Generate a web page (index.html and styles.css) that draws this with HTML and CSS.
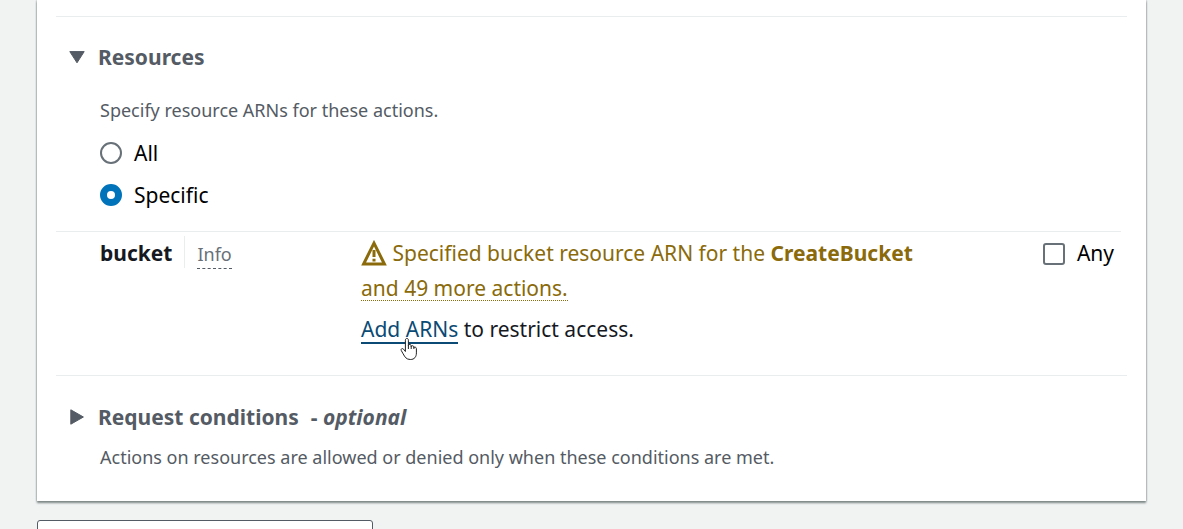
FILE: index.html
```html
<!DOCTYPE html>
<html lang="en">
<head>
<meta charset="utf-8">
<title>Resources</title>
<link rel="stylesheet" href="styles.css">
</head>
<body>
<main class="page">
  <div class="card">
    <section class="section resources">
      <h2 class="heading">
        <button class="toggle" type="button" aria-expanded="true">
          <svg class="caret" viewBox="0 0 18 18" aria-hidden="true"><path d="M1.8 3.6h14.4L9 14.8z"/></svg>
          <span>Resources</span>
        </button>
      </h2>
      <fieldset class="choices">
        <legend class="hint">Specify resource ARNs for these actions.</legend>
        <label class="choice"><input class="radio" type="radio" name="scope"><span>All</span></label>
        <label class="choice"><input class="radio" type="radio" name="scope" checked><span>Specific</span></label>
      </fieldset>
      <div class="resource">
        <div class="name">
          <strong>bucket</strong>
          <span class="info-wrap"><a class="info" href="#info">Info</a></span>
        </div>
        <div class="detail">
          <p class="warning">
            <svg class="warning-icon" viewBox="0 0 26 26" aria-hidden="true"><path class="warning-shape" d="M13 3.2 23.4 24H2.6z"/><path class="warning-mark" d="M13 10v7M13 18.8v2.6"/></svg>
            Specified bucket resource ARN for the <strong>CreateBucket</strong><br><a class="more" href="#actions">and 49 more actions.</a>
          </p>
          <p class="restrict"><span class="add-wrap"><a class="add" href="#add">Add ARNs</a><svg class="pointer" viewBox="0 0 18 24" aria-hidden="true"><path d="M5.4 14.5V3.2c0-2.4 3-2.4 3 0v5.2c.2-1.4 2.6-1.2 2.8.3v.8c.4-1.2 2.5-.9 2.7.4v.8c.5-1 2.5-.7 2.5 1v4.2c0 4-2 6.600-6 6.600-4.200 0-5.500-2.500-7.200-5.600L1.300 13.600c-.8-1.700 1-2.700 2.200-1.500z"/><path d="M8.400 8v4M11.200 9v3M13.900 10v2"/></svg></span> to restrict access.</p>
        </div>
        <label class="choice any"><input class="checkbox" type="checkbox"><span>Any</span></label>
      </div>
    </section>
    <section class="section conditions">
      <h2 class="heading">
        <button class="toggle" type="button" aria-expanded="false">
          <svg class="caret" viewBox="0 0 18 18" aria-hidden="true"><path d="M2.800 1.800v14.400L15.400 9z"/></svg>
          <span>Request conditions</span>
          <span class="optional">- <em>optional</em></span>
        </button>
      </h2>
      <p class="hint">Actions on resources are allowed or denied only when these conditions are met.</p>
    </section>
  </div>
  <button class="next" type="button"></button>
</main>
</body>
</html>
```

FILE: styles.css
```css
* {
  box-sizing: border-box;
}

body {
  margin: 0;
  height: 100vh;
  overflow: hidden;
  background: #f1f3f3;
  color: #16191f;
  font: 21px/35px "Noto Sans", sans-serif;
}

p,
h2,
fieldset,
legend {
  margin: 0;
  padding: 0;
  border: 0;
}

.page {
  padding: 0 37px;
}

.card {
  padding: 16px 19px 30px;
  background: #fff;
  box-shadow: 0 2px 2px #7f8787, 0 0 2px #8d9595;
}

.section {
  border-top: 1px solid #eaeded;
}

.resources {
  padding: 24px 0 28px;
}

.conditions {
  padding: 25px 0 0;
}

.heading {
  font-size: 21px;
  line-height: 32px;
}

.toggle {
  display: flex;
  align-items: center;
  gap: 12px;
  padding: 0 0 0 12px;
  border: 0;
  background: none;
  color: #545b64;
  font: inherit;
  cursor: pointer;
}

.caret {
  width: 18px;
  height: 18px;
  fill: #545b64;
  stroke: #545b64;
  stroke-width: 1;
  stroke-linejoin: round;
}

.hint {
  color: #545b64;
  font-size: 18px;
  line-height: 28px;
}

.choices,
.conditions .hint {
  padding-left: 44px;
}

.choices {
  padding-bottom: 12px;
}

.conditions .hint {
  padding-top: 10px;
}

.choices .hint {
  padding-top: 23px;
  margin-bottom: 11px;
}

.choice {
  display: flex;
  align-items: center;
  gap: 12px;
  color: #000;
}

.choices .choice {
  margin-bottom: 6px;
  line-height: 36px;
}

.radio,
.checkbox {
  appearance: none;
  flex: none;
  width: 22px;
  height: 22px;
  margin: 0;
  border: 2px solid #687078;
  background: #fff;
}

.radio {
  border-radius: 50%;
}

.radio:checked {
  border: 7px solid #0073bb;
}

.checkbox {
  border-radius: 3px;
}

.resource {
  display: grid;
  grid-template-columns: 261px 1fr auto;
  align-items: start;
  margin: 0 6px 0 0;
  padding: 4px 7px 0 44px;
  border-top: 1px solid #eaeded;
}

.name {
  display: flex;
  gap: 12px;
}

.info-wrap {
  height: 32px;
  padding-left: 12px;
  border-left: 1px solid #eaeded;
}

.info {
  display: inline-block;
  border-bottom: 1px dashed #545b64;
  color: #687078;
  font-size: 18px;
  line-height: 28px;
  text-decoration: none;
}

.warning {
  color: #8a6a0a;
}

.warning-icon {
  width: 26px;
  height: 26px;
  vertical-align: -5px;
  fill: none;
  stroke: #8a6a0a;
  stroke-width: 3;
}

.more {
  display: inline-block;
  border-bottom: 1px dotted #8a6a0a;
  color: inherit;
  line-height: 24px;
  text-decoration: none;
}

.restrict {
  padding-top: 6px;
}

.add-wrap {
  position: relative;
}

.add {
  display: inline-block;
  border-bottom: 2px solid #0a4a74;
  color: #0a4a74;
  line-height: 26px;
  text-decoration: none;
}

.pointer {
  position: absolute;
  right: 40px;
  bottom: -18px;
  width: 18px;
  height: 24px;
  fill: #fff;
  stroke: #222;
  stroke-width: 1;
}

.optional {
  font-weight: 700;
}

.next {
  display: block;
  width: 336px;
  height: 40px;
  margin-top: 19px;
  border: 1px solid #545b64;
  border-radius: 3px;
  background: #fff;
}
```
